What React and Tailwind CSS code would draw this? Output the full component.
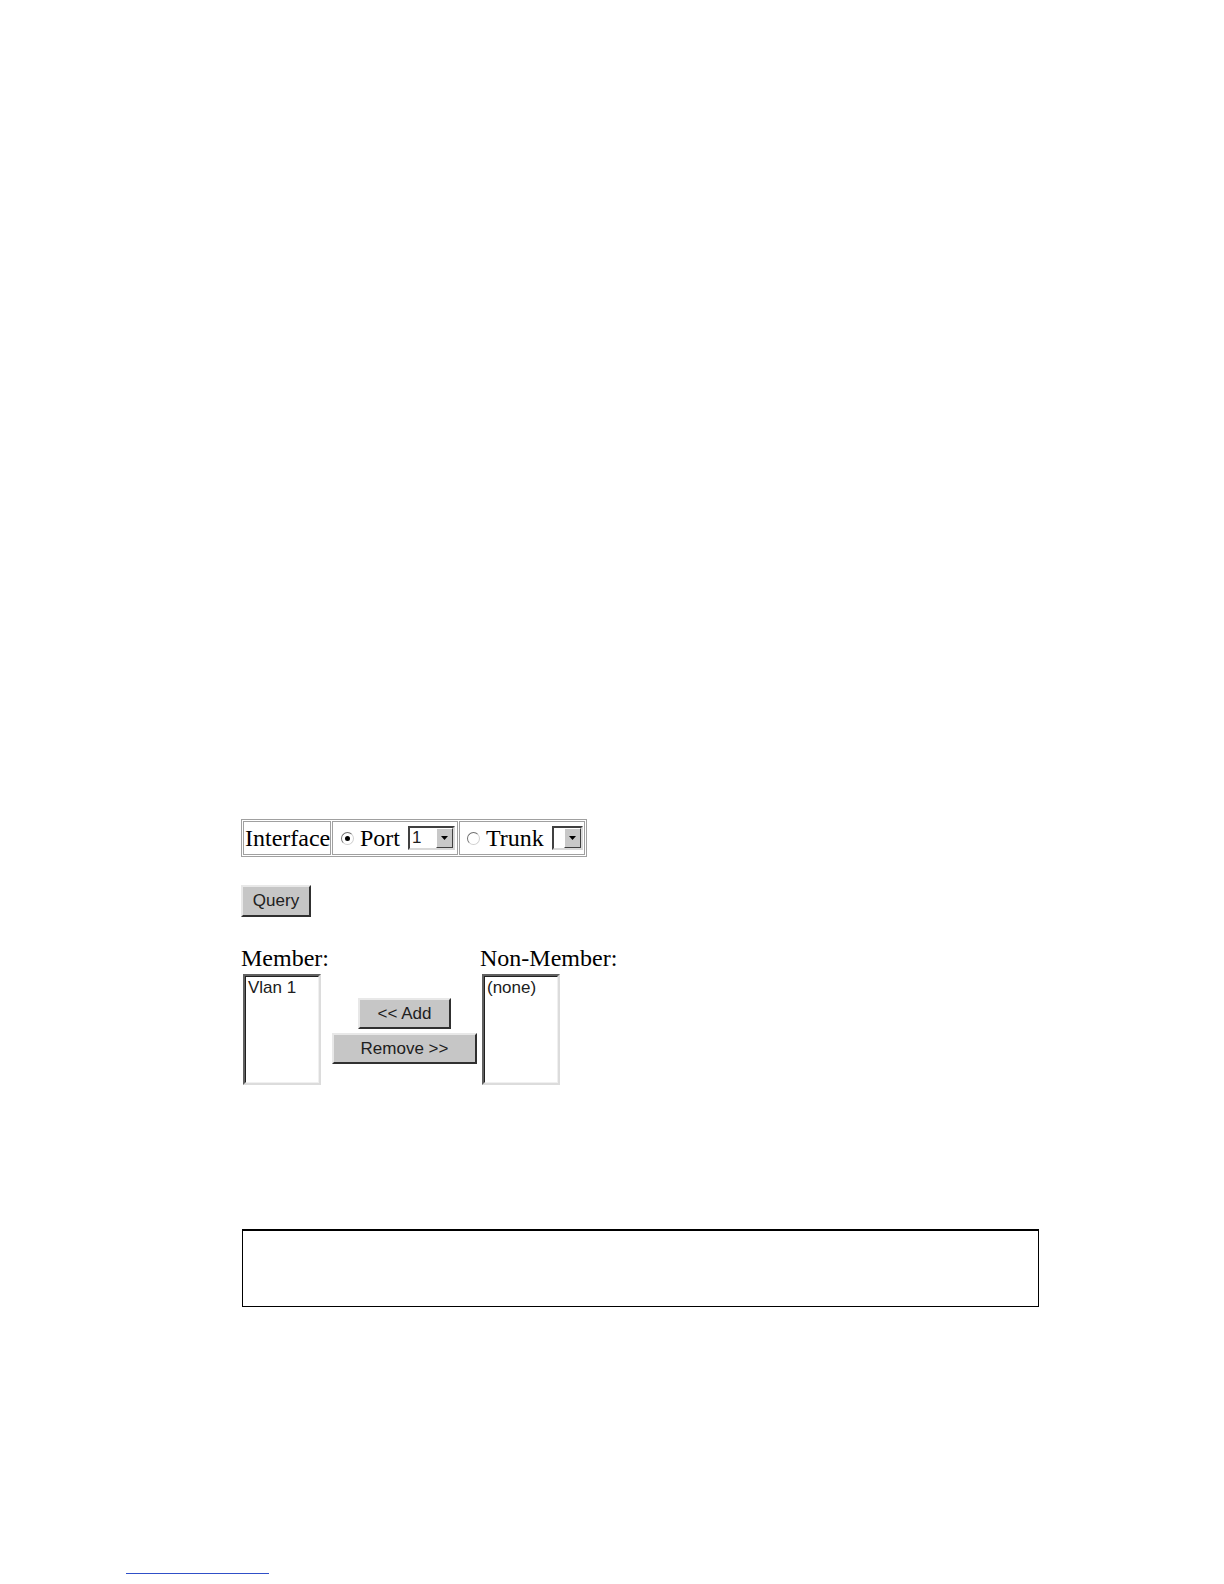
import React from "react";

const serif = { fontFamily: '"Liberation Serif", "Times New Roman", serif' };
const sans = { fontFamily: '"Liberation Sans", Arial, sans-serif' };

function Radio({ checked }) {
  return (
    <span className="flex w-[13px] h-[13px] rounded-full border border-t-[#707070] border-l-[#707070] border-b-[#d0d0d0] border-r-[#d0d0d0] bg-white items-center justify-center">
      {checked && <span className="w-[5px] h-[5px] rounded-full bg-black" />}
    </span>
  );
}

function Select({ value, width }) {
  return (
    <span
      className="flex h-[24px] border-2 border-t-[#404040] border-l-[#404040] border-b-[#d8d8d8] border-r-[#d8d8d8] bg-white items-stretch"
      style={{ width }}
    >
      <span className="flex-1 text-[17px] leading-[20px] pl-[2px] text-[#202020]" style={sans}>
        {value}
      </span>
      <span className="w-[17px] bg-[#c8c8c8] border border-t-white border-l-white border-b-[#404040] border-r-[#404040] flex items-center justify-center">
        <svg width="7" height="4" viewBox="0 0 7 4">
          <path d="M0 0 H7 L3.5 4 Z" fill="#000" />
        </svg>
      </span>
    </span>
  );
}

function Button({ children, className }) {
  return (
    <div
      className={
        "flex items-center justify-center bg-[#c6c6c6] border-2 border-t-[#e8e8e8] border-l-[#e8e8e8] border-b-[#303030] border-r-[#303030] text-[17px] text-[#202020] " +
        className
      }
      style={sans}
    >
      {children}
    </div>
  );
}

function ListBox({ children }) {
  return (
    <div className="w-[78px] h-[111px] border-2 border-t-[#606060] border-l-[#606060] border-b-[#dcdcdc] border-r-[#dcdcdc] bg-white">
      <div
        className="w-full h-full border border-t-[#202020] border-l-[#202020] border-b-[#f0f0f0] border-r-[#f0f0f0] pl-[2px] pt-[1px] text-[17px] leading-[19px] text-[#202020]"
        style={sans}
      >
        {children}
      </div>
    </div>
  );
}

export default function App() {
  return (
    <div className="relative w-[1224px] h-[1584px] bg-white text-black">
      <div className="pt-[819px] pl-[241px]">
        {/* Interface table */}
        <div className="inline-flex h-[38px] border border-[#a0a0a0] p-px gap-px">
          <div className="w-[88px] border border-[#a0a0a0] flex items-center text-[24px] leading-none" style={serif}>
            <span className="pl-px">Interface</span>
          </div>
          <div className="w-[126px] border border-[#a0a0a0] flex items-center text-[24px] leading-none" style={serif}>
            <span className="ml-[8px]"><Radio checked /></span>
            <span className="ml-[6px]">Port</span>
            <span className="ml-[8px]"><Select value="1" width={47} /></span>
          </div>
          <div className="w-[126px] border border-[#a0a0a0] flex items-center text-[24px] leading-none" style={serif}>
            <span className="ml-[7px]"><Radio /></span>
            <span className="ml-[6px]">Trunk</span>
            <span className="ml-[8px]"><Select value="" width={31} /></span>
          </div>
        </div>

        {/* Query */}
        <div className="mt-[28px]">
          <Button className="w-[70px] h-[32px]">Query</Button>
        </div>

        {/* Member / Non-member */}
        <div className="mt-[26px] flex">
          <div className="w-[91px]">
            <div className="h-[31px] text-[24px] leading-[31px]" style={serif}>Member:</div>
            <div className="ml-[2px]">
              <ListBox>Vlan 1</ListBox>
            </div>
          </div>
          <div className="w-[148px] pt-[55px] flex flex-col items-start gap-[4px]">
            <Button className="ml-[26px] w-[93px] h-[31px]">&lt;&lt; Add</Button>
            <Button className="w-[145px] h-[31px]">Remove &gt;&gt;</Button>
          </div>
          <div>
            <div className="h-[31px] text-[24px] leading-[31px]" style={serif}>Non-Member:</div>
            <div className="ml-[2px]">
              <ListBox>(none)</ListBox>
            </div>
          </div>
        </div>

        {/* Empty box */}
        <div className="mt-[144px] ml-px w-[797px] h-[78px] border border-black border-t-2"></div>
      </div>

      <div className="absolute left-[126px] top-[1573px] w-[143px] h-px bg-[#3050c8]"></div>
    </div>
  );
}
